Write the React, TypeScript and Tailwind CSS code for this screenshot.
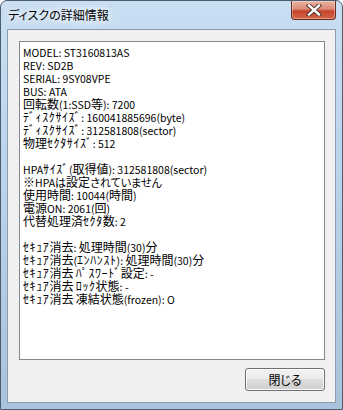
const LINES = [
  'MODEL: ST3160813AS',
  'REV: SD2B',
  'SERIAL: 9SY08VPE',
  'BUS: ATA',
  '回転数(1:SSD等): 7200',
  'ﾃﾞｨｽｸｻｲｽﾞ: 160041885696(byte)',
  'ﾃﾞｨｽｸｻｲｽﾞ: 312581808(sector)',
  '物理ｾｸﾀｻｲｽﾞ: 512',
  '',
  'HPAｻｲｽﾞ(取得値): 312581808(sector)',
  '※HPAは設定されていません',
  '使用時間: 10044(時間)',
  '電源ON: 2061(回)',
  '代替処理済ｾｸﾀ数: 2',
  '',
  'ｾｷｭｱ消去: 処理時間(30)分',
  'ｾｷｭｱ消去(ｴﾝﾊﾝｽﾄ): 処理時間(30)分',
  'ｾｷｭｱ消去 ﾊﾟｽﾜｰﾄﾞ設定: -',
  'ｾｷｭｱ消去 ﾛｯｸ状態: -',
  'ｾｷｭｱ消去 凍結状態(frozen): O',
]

const JP = "font-['Noto_Sans_CJK_JP',sans-serif] [font-feature-settings:'palt']"
const LATIN = "font-['Noto_Sans_CJK_JP',sans-serif] text-[10.5px]"
const HALF = "font-['Noto_Sans_CJK_JP',sans-serif] text-[12px] tracking-[0.6px]"
const KANA = `${JP} text-[11px]`
const KANJI = `${JP} text-[12px]`

// split a line into runs so the Latin part can be narrower than the kanji, like Meiryo UI
function runs(line: string) {
  const out: { t: string; cls: string }[] = []
  const kind = (c: string) =>
    /[\uFF61-\uFF9F]/.test(c) ? HALF : /[\u3040-\u30FF]/.test(c) ? KANA : /[\u203B\u3000-\u303F\u4E00-\u9FFF]/.test(c) ? KANJI : LATIN
  for (const c of line) {
    const k = kind(c)
    const last = out[out.length - 1]
    if (last && last.cls === k) last.t += c
    else out.push({ t: c, cls: k })
  }
  return out
}

function CloseButton() {
  return (
    <div className="w-[45px] h-[19px] rounded-b-[4px] border border-t-0 border-[#6b2a1f] bg-[linear-gradient(#eab2a4_0%,#d98a74_45%,#c4442a_55%,#d7664a_100%)] shadow-[inset_0_0_0_1px_rgba(255,255,255,0.35)] flex items-center justify-center">
      <svg width="16" height="12" viewBox="0 0 16 12">
        <path d="M3 1.5 L13 10.5 M13 1.5 L3 10.5" stroke="#4a2a24" strokeWidth="4.2" strokeLinecap="square" />
        <path d="M3 1.5 L13 10.5 M13 1.5 L3 10.5" stroke="#ffffff" strokeWidth="2.4" strokeLinecap="square" />
      </svg>
    </div>
  )
}

export default function App() {
  return (
    <div className="w-[343px] h-[410px] flex flex-col rounded-t-[7px] border border-[#4d5d70] bg-[linear-gradient(180deg,#c9def2_0%,#bcd4ec_40%,#a9c3dc_100%)] overflow-hidden">
      {/* title bar */}
      <div className="h-[28px] flex items-start justify-between pl-[7px] pr-[6px]">
        <span className={`mt-[6px] text-[12px] leading-[16px] text-black [text-shadow:0_0_6px_#fff,0_0_10px_#fff] ${JP}`}>
          ディスクの詳細情報
        </span>
        <CloseButton />
      </div>

      {/* client area */}
      <div className="flex-1 mx-[6px] mb-[6px] border border-[#8d9bab] bg-[#f0f0f0] flex flex-col pl-[11px] pr-[10px] pt-[11px] pb-[11px]">
        <div className="h-[319px] border border-[#828790] bg-white pl-[3px] pt-[3px] leading-[13px] text-black whitespace-pre">
          {LINES.map((l, i) => (
            <div key={i} className="h-[13px]">
              {runs(l).map((r, j) => (
                <span key={j} className={`inline-block h-[13px] leading-[13px] align-baseline ${r.cls}`}>{r.t}</span>
              ))}
            </div>
          ))}
        </div>
        <div className="flex justify-end mt-[8px]">
          <button className={`w-[80px] h-[23px] rounded-[3px] border border-[#707070] bg-[linear-gradient(#f2f2f2_0%,#ebebeb_50%,#dddddd_50%,#cfcfcf_100%)] shadow-[inset_0_0_0_1px_#fcfcfc] text-[12px] text-black ${JP}`}>
            閉じる
          </button>
        </div>
      </div>
    </div>
  )
}
